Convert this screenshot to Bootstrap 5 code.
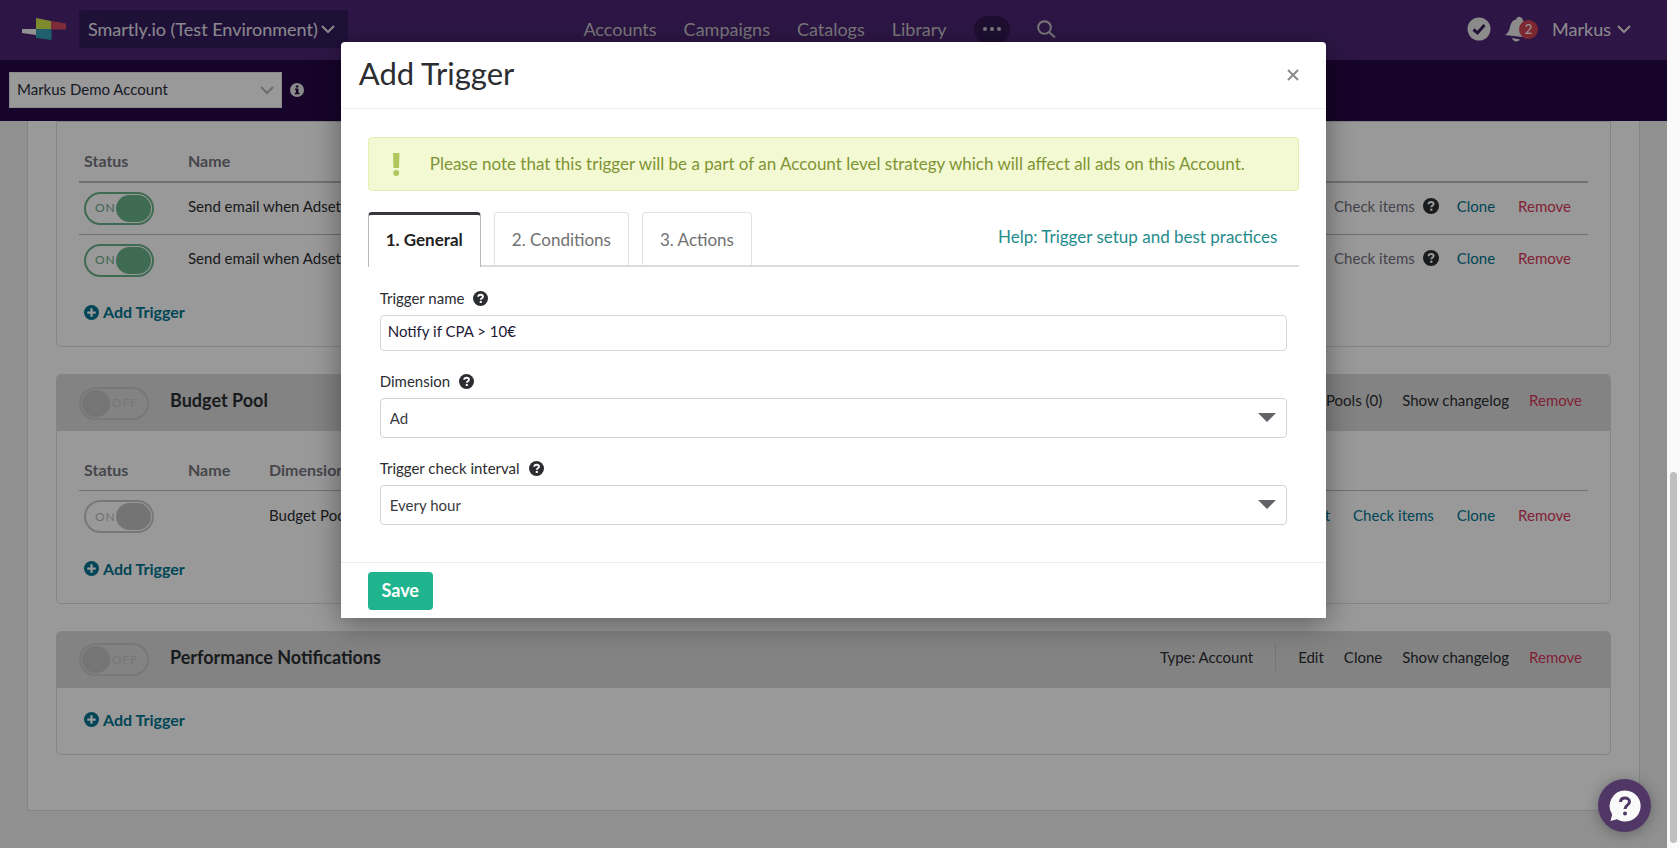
<!DOCTYPE html>
<html lang="en">
<head>
<meta charset="utf-8">
<meta name="viewport" content="width=device-width, initial-scale=1">
<title>Smartly.io – Add Trigger</title>
<link href="https://cdn.jsdelivr.net/npm/bootstrap@5.3.0/dist/css/bootstrap.min.css" rel="stylesheet">
<style>
  :root { --ink:#2b2d31; --teal:#007590; --danger:#d8385a; --line:#dcdcdc; }
  body { font-family: Lato, "Liberation Sans", sans-serif; font-size:15px; line-height:20px; color:var(--ink); background:#f0f0f0; }
  a { text-decoration:none; color:inherit; }
  svg { flex:none; display:block; }
  .topbar { height:60px; background:#4b2573; color:#e8e4ec; font-size:18px; padding:0 36px 2px 22px; }
  .topbar .side { flex:1 1 0; gap:13px; }
  .topbar .side-end { flex-basis:14px; gap:14px; }
  .env-btn { background:#351b5e; height:38px; width:269px; padding:0 13px 0 9px; border-radius:3px; color:inherit; font-size:18px; line-height:24px; border:0; white-space:nowrap; flex:none; }
  .mainnav { color:#cdc8cf; gap:27px; }
  .more-btn { width:36px; height:27px; border-radius:13px; border:0; background:#331a54; color:inherit; padding:0; }
  .bare { border:0; background:none; padding:0; color:inherit; }
  .user-btn { gap:6px; }
  .bell-btn { width:33px; }
  .count { position:absolute; left:14px; top:4px; width:19px; height:19px; border-radius:50%; background:#cf4252; color:#fff; font-size:13px; line-height:19px; text-align:center; }
  .subbar { height:61px; background:#250746; padding:0 9px 1px; }
  .account-select { width:273px; height:36px; border-radius:0; font-size:15px; line-height:20px; padding:6px 32px 8px 7px; color:#2b2d40; border:1px solid #e4e4e4;
    --bs-form-select-bg-img:url("data:image/svg+xml,%3csvg xmlns='http://www.w3.org/2000/svg' viewBox='0 0 14 14'%3e%3cpath fill='none' stroke='%23b4b4b4' stroke-width='2' d='M1 4l6 6 6-6'/%3e%3c/svg%3e"); background-position:right 7px center; background-size:14px 14px; }
  .sheet { margin:0 27px 37px; padding:0 28px 55px; background:#fff; border:1px solid var(--line); border-top:0; }
  .strategy { border:1px solid var(--line); border-radius:5px; margin-bottom:27px; background:#fff; }
  .strategy.scrolled { border-radius:0 0 5px 5px; }
  .strategy-head { height:56px; background:#dadada; border-radius:4px 4px 0 0; padding:0 28px 0 22px; }
  .strategy-head h2 { font-size:18px; line-height:20px; font-weight:700; margin:0 0 6px 21px; }
  .strategy-head .acts { margin-bottom:6px; gap:20px; }
  .acts .rule { width:1px; height:28px; background:#c4c4c4; margin:0 2px; }
  .triggers { margin:0 22px; padding-top:29px; }
  .triggers table { width:100%; margin:0; }
  .triggers th { font-size:16px; font-weight:700; color:#75767e; padding:0 0 10px; border-bottom:2px solid #b9c0bd; }
  .triggers.thin th { border-bottom-width:1px; }
  .triggers td { height:52px; padding:0 0 4px; border-bottom:1px solid #bbb; }
  .triggers tr:last-child td { border-bottom:0; }
  .triggers th:first-child, .triggers td:first-child { width:109px; padding-left:5px; }
  .triggers td:first-child { padding-bottom:0; }
  .triggers .name-col { width:81px; }
  .row-acts { gap:23px; padding-right:17px; justify-content:flex-end; }
  .row-acts .muted { color:#75717f; margin-right:-5px; }
  .row-acts .muted svg { color:var(--ink); }
  .t-link { color:var(--teal); } .d-link { color:var(--danger); }
  .adder { padding:16px 27px 24px; }
  .adder.roomy { padding:22px 27px 24px; }
  .add-link { color:var(--teal); font-size:16px; font-weight:700; display:inline-flex; align-items:center; gap:4px; vertical-align:top; height:20px; }
  .onoff { display:flex; align-items:center; justify-content:space-between; width:70px; height:33px; border:2px solid #c9c9c9; border-radius:17px; padding:1px 1px 1px 9px; font-size:12px; line-height:16px; letter-spacing:1px; color:#bdbdbd; position:relative; cursor:pointer; }
  .onoff::after { content:""; width:36px; height:27px; border-radius:14px; background:#c2c2c2; }
  .onoff.live { border-color:#6ab38a; color:#6aa886; } .onoff.live::after { background:#6ab38a; }
  .onoff.off { flex-direction:row-reverse; padding:1px 9px 1px 1px; border-color:#c8c8c8; color:#c6c6c6; }
  .onoff.off::after { width:28px; background:#c4c4c4; }
  .onoff input { position:absolute; inset:0; opacity:0; margin:0; }
  .veil { position:absolute; inset:0; background:rgba(0,0,0,.4); z-index:10; padding-top:42px; }
  .dialog { width:calc(59% + 2px); margin:0 auto; background:#fff; border-radius:4px 4px 0 0; box-shadow:0 5px 30px rgba(0,0,0,.4); }
  .dialog-head { height:67px; padding:2px 27px 6px 18px; border-bottom:1px solid #f0f0f0; }
  .dialog-head h1 { font-size:31px; line-height:36px; font-weight:400; margin:0; }
  .dialog-body { padding:28px 27px 37px; }
  .notice { height:54px; background:#f3f9d3; border:1px solid #e3edb4; border-radius:4px; color:#7f9432; font-size:17px; line-height:24px; padding:0 23px; margin:0 0 21px; gap:30px; }
  .steps { border-bottom:2px solid var(--line); gap:13px; font-size:17px; line-height:24px; }
  .steps .nav-link { border:1px solid #e2e2e2; border-bottom:0; border-radius:4px 4px 0 0; padding:15px 17px 14px; color:#717171; height:53px; }
  .steps .nav-link.active { color:#222; font-weight:700; border-color:#b9b9b9; border-top:3px solid #37363c; background:#fff; height:55px; padding:13px 17px; margin-bottom:-2px; }
  .help-link { color:#1f8c8c; margin-right:22px; padding-top:13px; }
  .fields { padding:21px 12px 0; }
  .fields .form-label { font-size:15px; line-height:20px; margin:0; }
  .lab { gap:9px; height:27px; padding-bottom:7px; }
  .fields .form-control { height:36px; font-size:15px; line-height:20px; padding:4px 7px 8px; border:1px solid #d5d7d9; border-radius:4px; color:#1f1a38; margin-bottom:20px; }
  .fields .form-select { height:40px; font-size:15px; line-height:20px; padding:9px 36px 9px 9px; border:1px solid #d0d3d5; border-radius:4px; color:#3a3a3e; margin-bottom:20px;
    --bs-form-select-bg-img:url("data:image/svg+xml,%3csvg xmlns='http://www.w3.org/2000/svg' viewBox='0 0 18 10'%3e%3cpath fill='%23626267' d='M0 0h18L9 9z'/%3e%3c/svg%3e"); background-position:right 10px center; background-size:18px 10px; }
  .fields .form-select:last-child { margin-bottom:0; }
  .dialog-foot { border-top:1px solid #ececec; padding:9px 27px 8px; }
  .save-btn { background:#20b48e; color:#fff; font-weight:700; font-size:18px; line-height:24px; width:65px; height:38px; padding:0 0 2px; border-radius:4px; border:0; }
  .track { width:13px; background:#fafafa; padding:0 3px 5px; }
  .thumb { width:7px; height:44%; border-radius:4px; background:#bfbfbf; }
  .chat-btn { position:absolute; right:16px; bottom:16px; z-index:20; width:53px; height:53px; border-radius:50%; background:#513765; border:0; padding:0; box-shadow:0 2px 14px rgba(0,0,0,.3); }
</style>
</head>
<body>
<svg width="0" height="0" class="position-absolute" aria-hidden="true">
  <symbol id="q" viewBox="0 0 16 16"><circle cx="8" cy="8" r="8" fill="currentColor"/><path d="M5.500 6.200C5.600 4.700 6.700 4 8.100 4c1.500 0 2.500.8 2.500 2 0 1.800-2.300 1.600-2.300 3.300" fill="none" stroke="#fff" stroke-width="2"/><rect x="7.200" y="10.600" width="2.200" height="2.200" fill="#fff"/></symbol>
  <symbol id="plus" viewBox="0 0 16 16"><circle cx="8" cy="8" r="8" fill="currentColor"/><path d="M8 3.500v9M3.500 8h9" stroke="#fff" stroke-width="2.400"/></symbol>
  <symbol id="chev" viewBox="0 0 14 10"><path d="M1 2l6 6 6-6" fill="none" stroke="currentColor" stroke-width="2"/></symbol>
</svg>
<div class="d-flex min-vh-100">
  <div class="flex-grow-1 position-relative">
    <header>
      <nav class="topbar d-flex align-items-center" aria-label="Main">
        <div class="side d-flex align-items-center">
          <svg width="44" height="22" viewBox="0 0 44 22" role="img" aria-label="Smartly.io"><path fill="#f4f4f4" d="M0 11h14v6L0 15z"/><path fill="#d1e64c" d="M14 0l15 3v8H14z"/><path fill="#d34a5f" d="M29 3l15 2.500v6H29z"/><path fill="#35a1b5" d="M14 11h15.500v11L14 20z"/></svg>
          <button class="env-btn d-flex align-items-center justify-content-between" type="button"><span>Smartly.io (Test Environment)</span><svg width="14" height="10"><use href="#chev"/></svg></button>
        </div>
        <div class="mainnav d-flex align-items-center">
          <a href="#">Accounts</a><a href="#">Campaigns</a><a href="#">Catalogs</a><a href="#">Library</a>
          <button class="more-btn d-flex align-items-center justify-content-center" type="button" aria-label="More"><svg width="18" height="4" viewBox="0 0 18 4" fill="currentColor"><circle cx="2" cy="2" r="2"/><circle cx="9" cy="2" r="2"/><circle cx="16" cy="2" r="2"/></svg></button>
          <button class="bare" type="button" aria-label="Search"><svg width="19" height="18" viewBox="0 0 19 18" fill="none" stroke="currentColor" stroke-width="2"><circle cx="7.500" cy="7.500" r="6.300"/><path d="M12 12l6 5.500"/></svg></button>
        </div>
        <div class="side side-end d-flex align-items-center justify-content-end">
          <button class="bare" type="button" aria-label="Status"><svg width="24" height="24" viewBox="0 0 24 24"><circle cx="12" cy="12" r="11.500" fill="#e8e8e8"/><path d="M6.500 12.500l4 3.500 7-8" fill="none" stroke="#3b1d60" stroke-width="3"/></svg></button>
          <button class="bare bell-btn position-relative" type="button" aria-label="Notifications"><svg width="26" height="26" viewBox="0 0 26 26" fill="#e8e8e8"><path d="M11 3.500C12 1 14 .500 15 1l2 1 8 18-8 1-17-2c3-2 4-4 5-8 1-4 2-6.500 6-7.500z"/><path d="M7 22l8 1.500c-2 3-7 2.500-8-1.500z"/></svg><span class="count">2</span></button>
          <button class="bare user-btn d-flex align-items-center" type="button"><span>Markus</span><svg width="14" height="10"><use href="#chev"/></svg></button>
        </div>
      </nav>
      <div class="subbar d-flex align-items-center">
        <select class="form-select account-select" aria-label="Account"><option>Markus Demo Account</option></select>
        <svg class="ms-2" width="14" height="14" viewBox="0 0 14 14"><circle cx="7" cy="7" r="7" fill="#e8e8e8"/><path d="M5.800 2.500h2.600v2H5.800zM5 5.500h3.400v4.300h1.100v1.400H4.800V9.800h1.100V7H5z" fill="#250746"/></svg>
      </div>
    </header>
    <main class="sheet">
      <section class="strategy scrolled">
        <div class="triggers">
          <table>
            <thead><tr><th>Status</th><th>Name</th><th></th></tr></thead>
            <tbody>
              <tr><td><label class="onoff live"><input type="checkbox" checked>ON</label></td><td>Send email when Adset</td><td><div class="d-flex row-acts"><span class="muted d-flex align-items-center gap-2">Check items <svg width="16" height="16"><use href="#q"/></svg></span><a class="t-link" href="#">Clone</a><a class="d-link" href="#">Remove</a></div></td></tr>
              <tr><td><label class="onoff live"><input type="checkbox" checked>ON</label></td><td>Send email when Adset</td><td><div class="d-flex row-acts"><span class="muted d-flex align-items-center gap-2">Check items <svg width="16" height="16"><use href="#q"/></svg></span><a class="t-link" href="#">Clone</a><a class="d-link" href="#">Remove</a></div></td></tr>
            </tbody>
          </table>
        </div>
        <div class="adder"><a class="add-link" href="#"><svg width="15" height="15"><use href="#plus"/></svg>Add Trigger</a></div>
      </section>
      <section class="strategy">
        <div class="strategy-head d-flex align-items-center">
          <label class="onoff off"><input type="checkbox">OFF</label><h2>Budget Pool</h2>
          <div class="acts d-flex align-items-center ms-auto"><a href="#">Pools (0)</a><a href="#">Show changelog</a><a class="d-link" href="#">Remove</a></div>
        </div>
        <div class="triggers thin">
          <table>
            <thead><tr><th>Status</th><th class="name-col">Name</th><th>Dimension</th><th></th></tr></thead>
            <tbody><tr><td><label class="onoff"><input type="checkbox" checked>ON</label></td><td></td><td>Budget Pool</td><td><div class="d-flex row-acts"><a class="t-link" href="#">Edit</a><a class="t-link" href="#">Check items</a><a class="t-link" href="#">Clone</a><a class="d-link" href="#">Remove</a></div></td></tr></tbody>
          </table>
        </div>
        <div class="adder"><a class="add-link" href="#"><svg width="15" height="15"><use href="#plus"/></svg>Add Trigger</a></div>
      </section>
      <section class="strategy mb-0">
        <div class="strategy-head d-flex align-items-center">
          <label class="onoff off"><input type="checkbox">OFF</label><h2>Performance Notifications</h2>
          <div class="acts d-flex align-items-center ms-auto"><span>Type: Account</span><span class="rule"></span><a href="#">Edit</a><a href="#">Clone</a><a href="#">Show changelog</a><a class="d-link" href="#">Remove</a></div>
        </div>
        <div class="adder roomy"><a class="add-link" href="#"><svg width="15" height="15"><use href="#plus"/></svg>Add Trigger</a></div>
      </section>
    </main>
    <div class="veil">
      <div class="dialog" role="dialog" aria-labelledby="dlg-title">
        <div class="dialog-head d-flex align-items-center justify-content-between">
          <h1 id="dlg-title">Add Trigger</h1>
          <button class="bare mt-1" type="button" aria-label="Close"><svg width="12" height="12" viewBox="0 0 12 12" stroke="#8a8a8a" stroke-width="2"><path d="M1 1l10 10M11 1L1 11"/></svg></button>
        </div>
        <div class="dialog-body">
          <div class="notice d-flex align-items-center" role="alert">
            <svg width="8" height="23" viewBox="0 0 8 23" fill="#b1c65c"><path d="M1 0h6.500L7 15H1.500z"/><circle cx="4.200" cy="20" r="2.900"/></svg>
            <span>Please note that this trigger will be a part of an Account level strategy which will affect all ads on this Account.</span>
          </div>
          <nav class="steps d-flex align-items-start">
            <a class="nav-link active" href="#">1. General</a><a class="nav-link" href="#">2. Conditions</a><a class="nav-link" href="#">3. Actions</a>
            <a class="help-link ms-auto" href="#">Help: Trigger setup and best practices</a>
          </nav>
          <form class="fields">
            <div class="lab d-flex align-items-center"><label class="form-label" for="tname">Trigger name</label><svg width="15" height="15"><use href="#q"/></svg></div>
            <input class="form-control" id="tname" type="text" value="Notify if CPA &gt; 10€">
            <div class="lab d-flex align-items-center"><label class="form-label" for="dim">Dimension</label><svg width="15" height="15"><use href="#q"/></svg></div>
            <select class="form-select" id="dim"><option>Ad</option></select>
            <div class="lab d-flex align-items-center"><label class="form-label" for="intv">Trigger check interval</label><svg width="15" height="15"><use href="#q"/></svg></div>
            <select class="form-select" id="intv"><option>Every hour</option></select>
          </form>
        </div>
        <div class="dialog-foot"><button class="save-btn d-block" type="button">Save</button></div>
      </div>
    </div>
    <button class="chat-btn d-flex align-items-center justify-content-center" type="button" aria-label="Help"><svg width="32" height="32" viewBox="0 0 32 32"><path fill="#fafafa" d="M16 .500a15.500 15.500 0 1 1-8 28.700L1.500 31l1.700-6.500A15.500 15.500 0 0 1 16 .500z"/><path d="M11.500 12c.2-2.800 2.200-4 4.500-4 2.600 0 4.500 1.500 4.500 3.800 0 3.400-4.500 3.200-4.500 7.200" fill="none" stroke="#513765" stroke-width="3"/><circle cx="16" cy="23.500" r="2" fill="#513765"/></svg></button>
  </div>
  <div class="track d-flex align-items-end"><div class="thumb"></div></div>
</div>
<script src="https://cdn.jsdelivr.net/npm/bootstrap@5.3.0/dist/js/bootstrap.bundle.min.js"></script>
</body>
</html>
